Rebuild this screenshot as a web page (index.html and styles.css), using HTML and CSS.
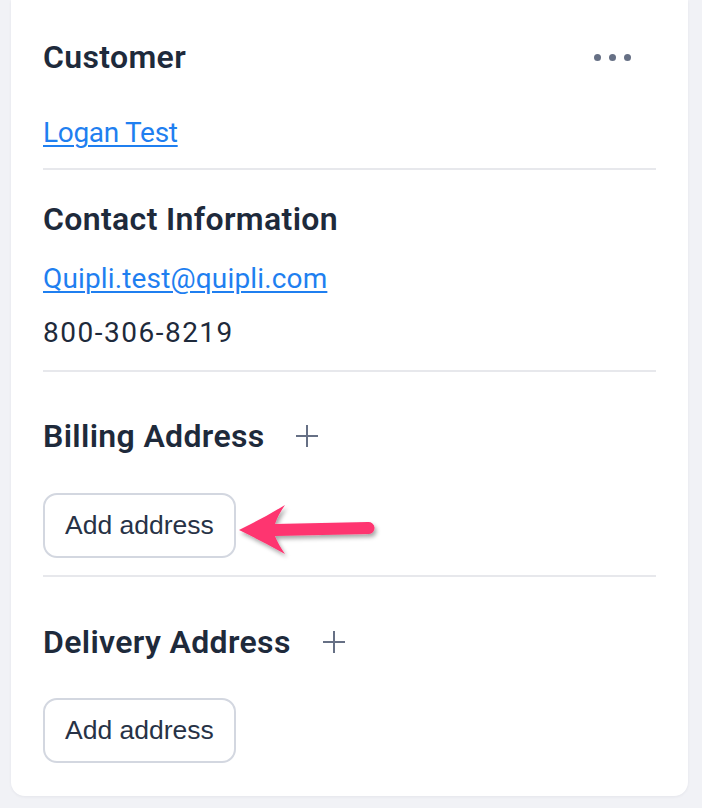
FILE: index.html
```html
<!DOCTYPE html>
<html lang="en">
<head>
<meta charset="utf-8">
<title>Customer</title>
<link rel="stylesheet" href="styles.css">
</head>
<body>
<div class="card">
  <section class="sec">
    <div class="head">
      <h2 class="title">Customer</h2>
      <button class="more" aria-label="More"><span></span><span></span><span></span></button>
    </div>
    <a class="link link-name" href="#">Logan Test</a>
  </section>
  <hr class="divider divider-1">
  <section class="sec">
    <h2 class="title title-contact">Contact Information</h2>
    <a class="link link-email" href="#">Quipli.test@quipli.com</a>
    <p class="text phone">800-306-8219</p>
  </section>
  <hr class="divider divider-2">
  <section class="sec">
    <div class="head head-addr">
      <h2 class="title">Billing Address</h2>
      <button class="plus" aria-label="Add billing address"><svg viewBox="0 0 24 24" width="24" height="24"><path d="M12 1v22M1 12h22" stroke="currentColor" stroke-width="2" fill="none"/></svg></button>
    </div>
    <div class="btn-row">
      <button class="btn">Add address</button>
      <svg class="arrow" viewBox="0 0 150 70" width="150" height="70"><defs><filter id="sh" x="-20%" y="-30%" width="140%" height="160%"><feDropShadow dx="2" dy="3" stdDeviation="2" flood-color="#000" flood-opacity="0.35"/></filter></defs><path filter="url(#sh)" fill="#fe3470" d="M7,35 Q32,23 53,10 Q46,20 43,29 L136,27 A6,6 0 0 1 137,39 L43,41 Q46,49 53,59 Q32,47 7,35 Z"/></svg>
    </div>
  </section>
  <hr class="divider divider-3">
  <section class="sec">
    <div class="head head-addr">
      <h2 class="title">Delivery Address</h2>
      <button class="plus" aria-label="Add delivery address"><svg viewBox="0 0 24 24" width="24" height="24"><path d="M12 1v22M1 12h22" stroke="currentColor" stroke-width="2" fill="none"/></svg></button>
    </div>
    <div class="btn-row btn-row-2">
      <button class="btn">Add address</button>
    </div>
  </section>
</div>
</body>
</html>
```
FILE: styles.css
```css
html, body {
  margin: 0;
  padding: 0;
}
body {
  background: #f1f2f6;
  font-family: Roboto, "Liberation Sans", sans-serif;
  color: #1e2a3b;
}
.card {
  background: #fff;
  margin: 0 14px 12px 11px;
  padding: 37px 32px 33px;
  border-radius: 0 0 14px 14px;
  box-shadow: 0 1px 3px rgba(30, 40, 60, 0.06);
  display: flex;
  flex-direction: column;
}
.sec {
  display: flex;
  flex-direction: column;
  align-items: flex-start;
}
.head {
  display: flex;
  align-items: center;
  justify-content: space-between;
  align-self: stretch;
}
.title {
  margin: 0;
  font-size: 32px;
  line-height: 40px;
  font-weight: 600;
  letter-spacing: 0.35px;
  color: #1e2a3b;
}
.more {
  border: 0;
  background: none;
  padding: 0;
  margin-right: 25px;
  display: flex;
  gap: 8px;
  align-items: center;
  height: 40px;
}
.more span {
  width: 7px;
  height: 7px;
  border-radius: 50%;
  background: #667085;
}
.link {
  font-size: 28px;
  line-height: 36px;
  color: #1f7ff0;
  text-decoration: underline;
  text-decoration-thickness: 2px;
  text-underline-offset: 3px;
}
.link-name { margin-top: 38px; letter-spacing: -0.3px; }
.title-contact { margin-top: 29px; }
.link-email { margin-top: 22px; letter-spacing: 0.15px; }
.text {
  margin: 18px 0 0;
  font-size: 28px;
  line-height: 36px;
  color: #1e2a3b;
}
.phone { letter-spacing: 1.5px; }
.divider {
  border: 0;
  margin: 0;
  height: 2px;
  background: #e7e8ec;
}
.divider-1 { margin-top: 17px; }
.divider-2 { margin-top: 19px; }
.divider-3 { margin-top: 17px; }
.divider-2 + .sec .head-addr { margin-top: 44px; gap: 30px; }
.divider-3 + .sec .head-addr { margin-top: 45px; gap: 31px; }
.head-addr {
  justify-content: flex-start;
}
.plus {
  border: 0;
  background: none;
  padding: 0;
  color: #667085;
  display: flex;
}
.btn-row {
  position: relative;
  margin-top: 37px;
  align-self: stretch;
  display: flex;
}
.btn-row-2 { margin-top: 36px; }
.btn {
  box-sizing: border-box;
  height: 65px;
  padding: 0 20px;
  border: 2px solid #d3d7e0;
  border-radius: 14px;
  background: #fff;
  font-family: "Liberation Sans", Arial, sans-serif;
  font-size: 26.5px;
  color: #273246;
  display: inline-flex;
  align-items: center;
}
.arrow {
  position: absolute;
  left: 189px;
  top: 2px;
}
```
